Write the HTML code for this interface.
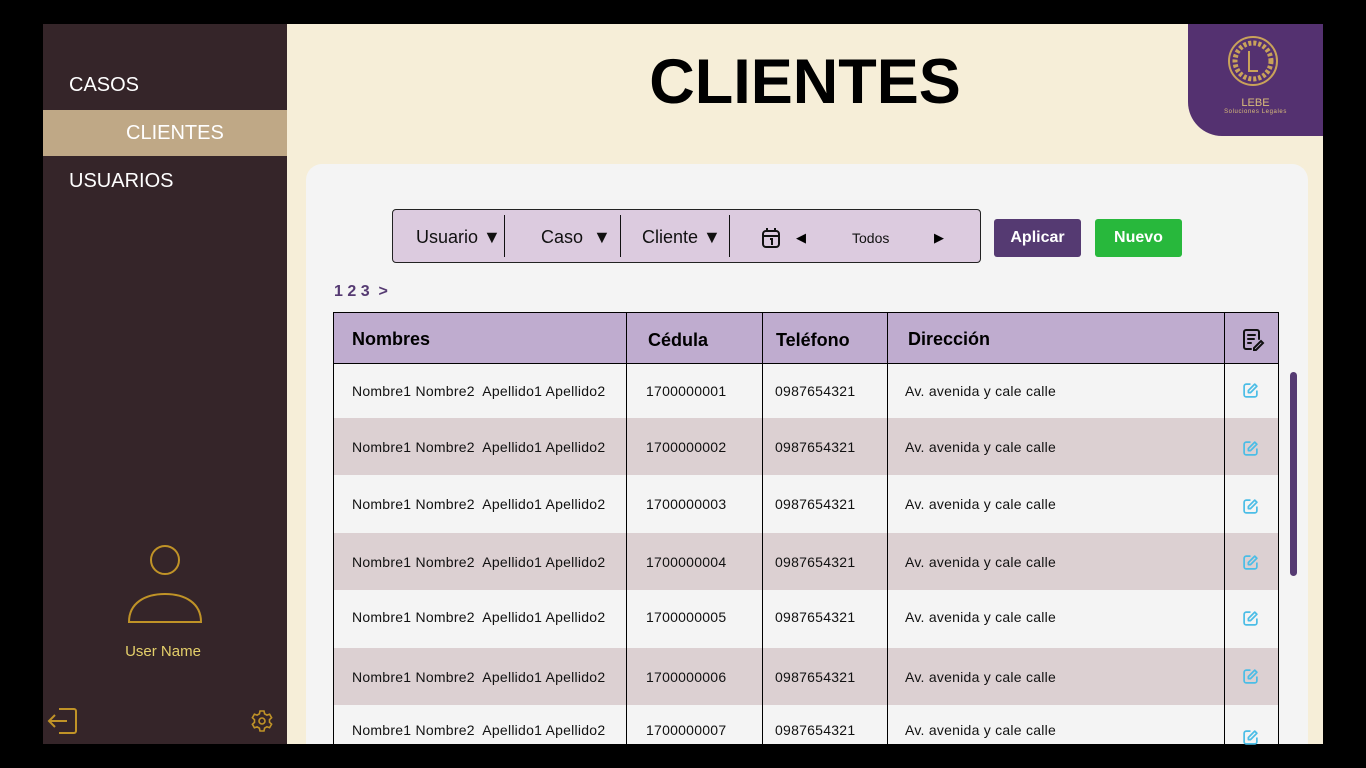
<!DOCTYPE html><html><head><style>
*{margin:0;padding:0;box-sizing:border-box}
body{width:1366px;height:768px;background:#000;position:relative;overflow:hidden;font-family:"Liberation Sans",sans-serif}
.a{position:absolute}
.side{left:43px;top:24px;width:244px;height:720px;background:#352529}
.main{left:287px;top:24px;width:1036px;height:720px;background:#f6eed8;overflow:hidden}
.nav{color:#fff;font-size:20px}
.panel{left:306px;top:164px;width:1002px;height:580px;background:#f4f4f4;border-radius:16px 16px 0 0}
.row{left:334px;width:944px;font-size:14px;color:#111;letter-spacing:.25px}
.row span{position:absolute;top:50%;transform:translateY(-50%)}
.vl{position:absolute;top:313px;width:1px;height:431px;background:#000}
</style></head><body>
<div class="a side"></div>
<div class="a nav" style="left:69px;top:74px">CASOS</div>
<div class="a" style="left:43px;top:110px;width:244px;height:46px;background:#bfa886"></div>
<div class="a nav" style="left:126px;top:122px">CLIENTES</div>
<div class="a nav" style="left:69px;top:170px">USUARIOS</div>
<svg class="a" style="left:125px;top:543px" width="80" height="84" fill="none" stroke="#c09327" stroke-width="2"><circle cx="40" cy="17" r="14"/><path d="M4 79 C4 60 20 51 40 51 C60 51 76 60 76 79 Z"/></svg>
<div class="a" style="left:43px;top:643px;width:240px;text-align:center;color:#e4cf6a;font-size:15px">User Name</div>
<svg class="a" style="left:47px;top:706px" width="32" height="30" fill="none" stroke="#c09327" stroke-width="2"><path d="M12 3h15a2 2 0 0 1 2 2v20a2 2 0 0 1-2 2H12M2 15h18M8 9l-6 6 6 6"/></svg>
<svg class="a" style="left:250px;top:709px" width="24" height="24" viewBox="0 0 24 24" fill="none" stroke="#c09327" stroke-width="1.6"><circle cx="12" cy="12" r="3"/><path d="M10 2h4l.6 2.8 2.3 1.3 2.7-.9 2 3.5-2.1 1.9v2.7l2.1 1.9-2 3.5-2.7-.9-2.3 1.3L14 22h-4l-.6-2.8-2.3-1.3-2.7.9-2-3.5 2.1-1.9v-2.7L2.4 8.7l2-3.5 2.7.9 2.3-1.3z"/></svg>
<div class="a main"></div>
<div class="a" style="left:287px;top:46px;width:1036px;text-align:center;font-size:63px;font-weight:bold;color:#000">CLIENTES</div>
<div class="a" style="left:1188px;top:24px;width:135px;height:112px;background:#543170;border-bottom-left-radius:34px"></div>
<svg class="a" style="left:1227px;top:35px" width="52" height="52" fill="none" stroke="#c9a25a"><circle cx="26" cy="26" r="24" stroke-width="2"/><circle cx="26" cy="26" r="18" stroke-width="5" stroke-dasharray="3 2"/><circle cx="26" cy="26" r="14" fill="#543170" stroke="none"/><path d="M22 16v20h9" stroke-width="2"/></svg>
<div class="a" style="left:1188px;top:97px;width:135px;text-align:center;color:#d9bd7a;font-size:11px">LEBE</div>
<div class="a" style="left:1188px;top:109px;width:135px;text-align:center;color:#d9bd7a;font-size:6px;letter-spacing:.6px">Soluciones Legales</div>
<div class="a panel"></div>
<div class="a" style="left:392px;top:209px;width:589px;height:54px;background:#dccbdf;border:1px solid #222;border-radius:4px"></div>
<div class="a" style="left:504px;top:215px;width:1px;height:42px;background:#111"></div>
<div class="a" style="left:620px;top:215px;width:1px;height:42px;background:#111"></div>
<div class="a" style="left:729px;top:215px;width:1px;height:42px;background:#111"></div>
<div class="a" style="left:416px;top:227px;font-size:18px;color:#111">Usuario ▼</div>
<div class="a" style="left:541px;top:227px;font-size:18px;color:#111">Caso&nbsp;&nbsp;▼</div>
<div class="a" style="left:642px;top:227px;font-size:18px;color:#111">Cliente ▼</div>
<svg class="a" style="left:761px;top:227px" width="20" height="22" fill="none" stroke="#111" stroke-width="2"><rect x="2" y="4" width="16" height="16" rx="3"/><path d="M2 9h16M6 1v4M14 1v4M9 12h2v6"/></svg>
<div class="a" style="left:796px;top:230px;font-size:13px">◀</div>
<div class="a" style="left:852px;top:230px;font-size:14px;color:#111">Todos</div>
<div class="a" style="left:934px;top:230px;font-size:13px">▶</div>
<div class="a" style="left:994px;top:219px;width:87px;height:38px;background:#553a72;border-radius:3px;color:#fff;font-weight:bold;font-size:16px;text-align:center;line-height:38px">Aplicar</div>
<div class="a" style="left:1095px;top:219px;width:87px;height:38px;background:#28b83c;border-radius:3px;color:#fff;font-weight:bold;font-size:16px;text-align:center;line-height:38px">Nuevo</div>
<div class="a" style="left:334px;top:283px;font-size:16px;font-weight:bold;color:#553a72">1 2 3 &nbsp;&gt;</div>
<div class="a" style="left:333px;top:312px;width:946px;height:52px;background:#bfaccf;border:1px solid #000"></div>
<div class="a" style="left:352px;top:329px;font-size:18px;font-weight:bold">Nombres</div>
<div class="a" style="left:648px;top:330px;font-size:18px;font-weight:bold">Cédula</div>
<div class="a" style="left:776px;top:330px;font-size:18px;font-weight:bold">Teléfono</div>
<div class="a" style="left:908px;top:329px;font-size:18px;font-weight:bold">Dirección</div>
<svg class="a" style="left:1241px;top:328px" width="24" height="24" fill="none" stroke="#111" stroke-width="2" stroke-linecap="round"><path d="M10 21H5a2 2 0 0 1-2-2V4a2 2 0 0 1 2-2h11a2 2 0 0 1 2 2v7M7 7h7M7 11h6M7 15h3M13 20l7-7 2 2-7 7h-2z"/></svg>

<div class="a row" style="top:364px;height:54px;background:#f4f4f4"><span style="left:18px">Nombre1 Nombre2&nbsp; Apellido1 Apellido2</span><span style="left:312px">1700000001</span><span style="left:441px">0987654321</span><span style="left:571px">Av. avenida y cale calle</span></div>
<div class="a row" style="top:418px;height:57px;background:#dcd0d2"><span style="left:18px">Nombre1 Nombre2&nbsp; Apellido1 Apellido2</span><span style="left:312px">1700000002</span><span style="left:441px">0987654321</span><span style="left:571px">Av. avenida y cale calle</span></div>
<div class="a row" style="top:475px;height:58px;background:#f4f4f4"><span style="left:18px">Nombre1 Nombre2&nbsp; Apellido1 Apellido2</span><span style="left:312px">1700000003</span><span style="left:441px">0987654321</span><span style="left:571px">Av. avenida y cale calle</span></div>
<div class="a row" style="top:533px;height:57px;background:#dcd0d2"><span style="left:18px">Nombre1 Nombre2&nbsp; Apellido1 Apellido2</span><span style="left:312px">1700000004</span><span style="left:441px">0987654321</span><span style="left:571px">Av. avenida y cale calle</span></div>
<div class="a row" style="top:590px;height:58px;background:#f4f4f4"><span style="left:18px;top:27px">Nombre1 Nombre2&nbsp; Apellido1 Apellido2</span><span style="left:312px;top:27px">1700000005</span><span style="left:441px;top:27px">0987654321</span><span style="left:571px;top:27px">Av. avenida y cale calle</span></div>
<div class="a row" style="top:648px;height:57px;background:#dcd0d2"><span style="left:18px">Nombre1 Nombre2&nbsp; Apellido1 Apellido2</span><span style="left:312px">1700000006</span><span style="left:441px">0987654321</span><span style="left:571px">Av. avenida y cale calle</span></div>
<div class="a row" style="top:705px;height:39px;background:#f4f4f4"><span style="left:18px;top:25px">Nombre1 Nombre2&nbsp; Apellido1 Apellido2</span><span style="left:312px;top:25px">1700000007</span><span style="left:441px;top:25px">0987654321</span><span style="left:571px;top:25px">Av. avenida y cale calle</span></div>

<div class="vl" style="left:333px"></div><div class="vl" style="left:626px"></div><div class="vl" style="left:762px"></div><div class="vl" style="left:887px"></div><div class="vl" style="left:1224px"></div><div class="vl" style="left:1278px"></div>

<svg width="0" height="0" style="position:absolute"><defs><symbol id="e" viewBox="0 0 16 16"><path d="M8 2H4a2 2 0 0 0-2 2v8a2 2 0 0 0 2 2h8a2 2 0 0 0 2-2V8M6 10V8l6-6 2 2-6 6z" fill="none" stroke="#4bbde6" stroke-width="1.6" stroke-linejoin="round"/></symbol></defs></svg>
<svg class="a" style="left:1242px;top:382px" width="17" height="17"><use href="#e"/></svg>
<svg class="a" style="left:1242px;top:440px" width="17" height="17"><use href="#e"/></svg>
<svg class="a" style="left:1242px;top:498px" width="17" height="17"><use href="#e"/></svg>
<svg class="a" style="left:1242px;top:554px" width="17" height="17"><use href="#e"/></svg>
<svg class="a" style="left:1242px;top:610px" width="17" height="17"><use href="#e"/></svg>
<svg class="a" style="left:1242px;top:668px" width="17" height="17"><use href="#e"/></svg>
<svg class="a" style="left:1242px;top:729px" width="17" height="17"><use href="#e"/></svg>
<div class="a" style="left:1290px;top:372px;width:7px;height:204px;background:#553a72;border-radius:4px"></div>
</body></html>
